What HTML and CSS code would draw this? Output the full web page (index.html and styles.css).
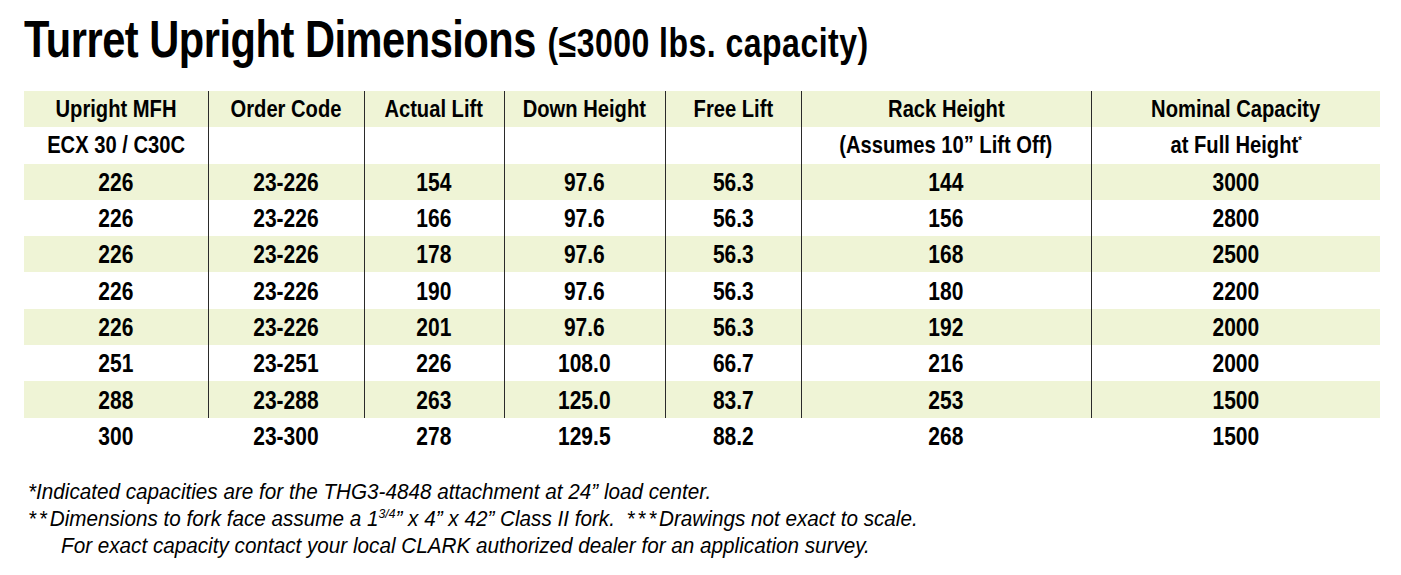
FILE: index.html
```html
<!DOCTYPE html>
<html>
<head>
<meta charset="utf-8">
<link rel="stylesheet" href="styles.css">
</head>
<body>
<div class="page">
  <h1 class="title"><span class="main">Turret Upright Dimensions</span> <span class="sub">(≤3000 lbs. capacity)</span></h1>
  <table class="dims">
    <colgroup>
      <col class="c1"><col class="c2"><col class="c3"><col class="c4"><col class="c5"><col class="c6"><col class="c7">
    </colgroup>
    <tr class="g head"><td><span>Upright MFH</span></td><td><span>Order Code</span></td><td><span>Actual Lift</span></td><td><span>Down Height</span></td><td><span>Free Lift</span></td><td><span>Rack Height</span></td><td><span>Nominal Capacity</span></td></tr>
    <tr class="head"><td><span>ECX 30 / C30C</span></td><td></td><td></td><td></td><td></td><td><span>(Assumes 10” Lift Off)</span></td><td><span>at Full Height<sup>*</sup></span></td></tr>
    <tr class="g"><td><span>226</span></td><td><span>23-226</span></td><td><span>154</span></td><td><span>97.6</span></td><td><span>56.3</span></td><td><span>144</span></td><td><span>3000</span></td></tr>
    <tr><td><span>226</span></td><td><span>23-226</span></td><td><span>166</span></td><td><span>97.6</span></td><td><span>56.3</span></td><td><span>156</span></td><td><span>2800</span></td></tr>
    <tr class="g"><td><span>226</span></td><td><span>23-226</span></td><td><span>178</span></td><td><span>97.6</span></td><td><span>56.3</span></td><td><span>168</span></td><td><span>2500</span></td></tr>
    <tr><td><span>226</span></td><td><span>23-226</span></td><td><span>190</span></td><td><span>97.6</span></td><td><span>56.3</span></td><td><span>180</span></td><td><span>2200</span></td></tr>
    <tr class="g"><td><span>226</span></td><td><span>23-226</span></td><td><span>201</span></td><td><span>97.6</span></td><td><span>56.3</span></td><td><span>192</span></td><td><span>2000</span></td></tr>
    <tr><td><span>251</span></td><td><span>23-251</span></td><td><span>226</span></td><td><span>108.0</span></td><td><span>66.7</span></td><td><span>216</span></td><td><span>2000</span></td></tr>
    <tr class="g"><td><span>288</span></td><td><span>23-288</span></td><td><span>263</span></td><td><span>125.0</span></td><td><span>83.7</span></td><td><span>253</span></td><td><span>1500</span></td></tr>
    <tr class="last"><td><span>300</span></td><td><span>23-300</span></td><td><span>278</span></td><td><span>129.5</span></td><td><span>88.2</span></td><td><span>268</span></td><td><span>1500</span></td></tr>
  </table>
  <div class="notes">
    <p><span>*Indicated capacities are for the THG3-4848 attachment at 24” load center.</span></p>
    <p><span><span class="ast">**</span>Dimensions to fork face assume a 1<sup class="frac">3/4</sup>” x 4” x 42” Class II fork. &nbsp;<span class="ast">***</span>Drawings not exact to scale.</span></p>
    <p class="indent"><span>For exact capacity contact your local CLARK authorized dealer for an application survey.</span></p>
  </div>
</div>
</body>
</html>
```
FILE: styles.css
```css
html, body {
  margin: 0;
  padding: 0;
  background: #fff;
}
body {
  font-family: "Liberation Sans", Arial, sans-serif;
  color: #000;
}
.page {
  padding: 11px 21px 0 24px;
}
.title {
  margin: 0;
  height: 56px;
  font-size: 52px;
  font-weight: bold;
  line-height: 56px;
  white-space: nowrap;
  transform: scaleX(0.8);
  transform-origin: left center;
}
.main {
  letter-spacing: -0.6px;
}
.sub {
  font-size: 40px;
  line-height: 40px;
  letter-spacing: 0.6px;
}
.dims {
  margin-top: 24px;
  border-collapse: collapse;
  width: 1356px;
  table-layout: fixed;
}
.c1 { width: 184px; }
.c2 { width: 156px; }
.c3 { width: 140px; }
.c4 { width: 161px; }
.c5 { width: 136px; }
.c6 { width: 290px; }
.c7 { width: 289px; }
.dims td {
  height: 36.3px;
  padding: 0;
  text-align: center;
  vertical-align: middle;
  font-weight: bold;
  font-size: 25px;
  line-height: 36px;
  border-left: 1px solid #2a2a2a;
  box-sizing: border-box;
  white-space: nowrap;
  overflow: visible;
}
.dims tr.head td {
  font-size: 24px;
}
.dims td > span {
  display: inline-block;
  transform: scaleX(0.84);
  transform-origin: center center;
}
.dims td:first-child {
  border-left: none;
}
.dims tr.last td {
  border-left: none;
}
.dims tr.g td {
  background: #eff4d6;
}
.dims sup {
  font-size: 11px;
  line-height: 0;
  vertical-align: 9px;
}
.notes {
  margin-top: 24px;
  padding-left: 4px;
  font-style: italic;
  font-size: 22px;
  line-height: 27px;
}
.notes p {
  margin: 0;
  white-space: nowrap;
}
.notes p > span {
  display: inline-block;
  transform: scaleX(0.94);
  transform-origin: left center;
}
.notes .indent {
  padding-left: 33px;
}
.ast {
  letter-spacing: 3px;
}
.frac {
  font-size: 13px;
  line-height: 0;
  vertical-align: 8px;
}
```
